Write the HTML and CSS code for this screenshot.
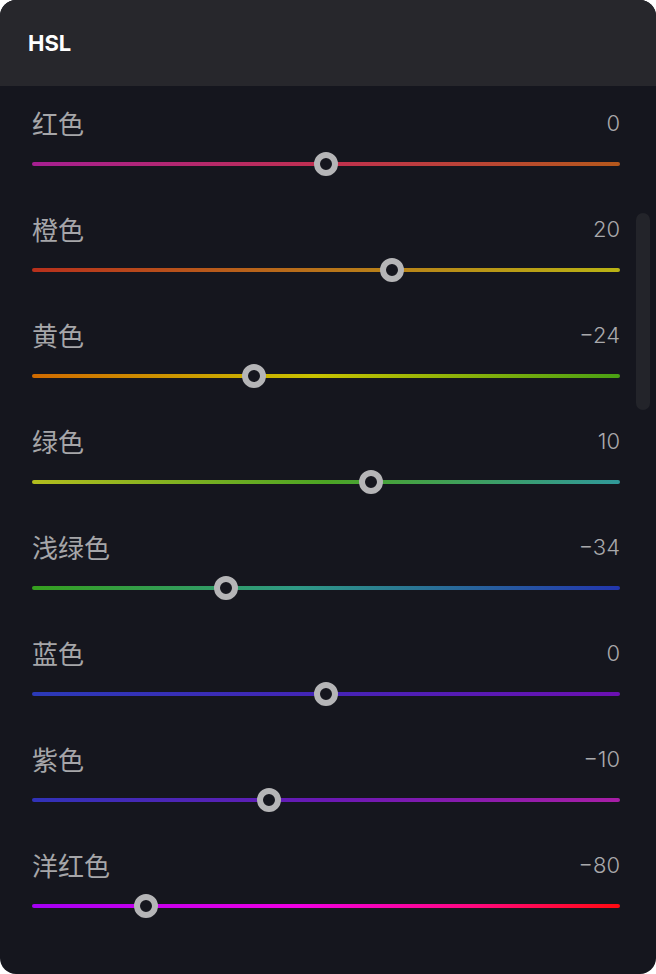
FILE: index.html
```html
<!DOCTYPE html>
<html lang="zh-CN">
<head>
  <meta charset="UTF-8" />
  <title>HSL</title>
  <link rel="stylesheet" href="styles.css">
</head>
<body>

  <div class="panel">
    <div class="panel-head">HSL</div>

    <div class="panel-body">
      <div class="fila">
        <div class="fila-top"><span class="nombre">红色</span><span class="valor">0</span></div>
        <div class="pista g-rojo"><span class="bola" style="left:50%"></span></div>
      </div>
      <div class="fila">
        <div class="fila-top"><span class="nombre">橙色</span><span class="valor">20</span></div>
        <div class="pista g-naranja"><span class="bola" style="left:61.2%"></span></div>
      </div>
      <div class="fila">
        <div class="fila-top"><span class="nombre">黄色</span><span class="valor">&minus;24</span></div>
        <div class="pista g-amarillo"><span class="bola" style="left:37.8%"></span></div>
      </div>
      <div class="fila">
        <div class="fila-top"><span class="nombre">绿色</span><span class="valor">10</span></div>
        <div class="pista g-verde"><span class="bola" style="left:57.7%"></span></div>
      </div>
      <div class="fila">
        <div class="fila-top"><span class="nombre">浅绿色</span><span class="valor">&minus;34</span></div>
        <div class="pista g-aqua"><span class="bola" style="left:33%"></span></div>
      </div>
      <div class="fila">
        <div class="fila-top"><span class="nombre">蓝色</span><span class="valor">0</span></div>
        <div class="pista g-azul"><span class="bola" style="left:50%"></span></div>
      </div>
      <div class="fila">
        <div class="fila-top"><span class="nombre">紫色</span><span class="valor">&minus;10</span></div>
        <div class="pista g-morado"><span class="bola" style="left:40.3%"></span></div>
      </div>
      <div class="fila">
        <div class="fila-top"><span class="nombre">洋红色</span><span class="valor">&minus;80</span></div>
        <div class="pista g-magenta"><span class="bola" style="left:19.4%"></span></div>
      </div>
    </div>

    <div class="scroll"></div>
  </div>

</body>
</html>
```

FILE: styles.css
```css
body {
  margin: 0;
  background-color: #fff;
  font-family: Inter, "Noto Sans CJK SC", sans-serif;
}
.panel {
  position: relative;
  width: 656px;
  height: 974px;
  background-color: #15161e;
  border-radius: 16px;
  overflow: hidden;
}
.panel-head {
  height: 86px;
  box-sizing: border-box;
  padding-left: 28px;
  display: flex;
  align-items: center;
  background-color: #27272c;
  color: #fff;
  font-weight: 700;
  font-size: 22px;
}
.panel-body {
  padding: 20px 36px 0 32px;
}
.fila {
  height: 106px;
}
.fila-top {
  height: 36px;
  display: flex;
  justify-content: space-between;
  align-items: center;
}
.nombre {
  color: #a6a6a9;
  font-family: "Noto Sans CJK SC", sans-serif;
  font-size: 26px;
  margin-top: -4px;
}
.valor {
  color: #a9a9ac;
  font-family: Inter, sans-serif;
  font-size: 22px;
  font-weight: 300;
  margin-top: -3px;
}
.pista {
  position: relative;
  height: 4px;
  margin-top: 20px;
  border-radius: 2px;
}
.bola {
  position: absolute;
  top: 50%;
  width: 24px;
  height: 24px;
  box-sizing: border-box;
  margin: -12px 0 0 -12px;
  border: 6px solid #b5b5b7;
  border-radius: 50%;
  background-color: #15161e;
}
.g-rojo { background: linear-gradient(90deg, #a61f92, #c0304f 50%, #b5581c); }
.g-naranja { background: linear-gradient(90deg, #b8301c, #b8741a 50%, #b9b314); }
.g-amarillo { background: linear-gradient(90deg, #d06a00, #c8c200 48%, #4aa014); }
.g-verde { background: linear-gradient(90deg, #b3bd1e, #4ca424 50%, #30999a); }
.g-aqua { background: linear-gradient(90deg, #36a01e, #2f9a86 45%, #2236ae); }
.g-azul { background: linear-gradient(90deg, #2b3ab8, #4424b6 50%, #6c10b2); }
.g-morado { background: linear-gradient(90deg, #3032b8, #6a18b4 50%, #a81ea6); }
.g-magenta { background: linear-gradient(90deg, #a400f4, #f000e4 45%, #ff0880 75%, #ff0a10); }
.scroll {
  position: absolute;
  left: 636px;
  top: 213px;
  width: 14px;
  height: 197px;
  border-radius: 7px;
  background-color: #23242a;
}
```
